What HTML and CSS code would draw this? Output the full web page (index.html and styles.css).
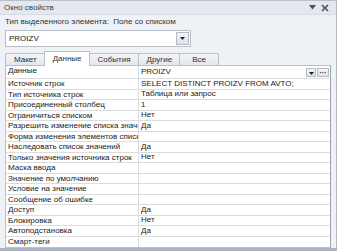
FILE: index.html
```html
<!DOCTYPE html>
<html lang="ru">
<head>
    <meta charset="UTF-8">
    <title>Окно свойств</title>
    <link rel="stylesheet" href="styles.css">
</head>
<body>
    <div class="props-window">
        <div class="title-bar">
            <span class="title">Окно свойств</span>
            <span class="title-tools">
                <svg width="7" height="5" viewBox="0 0 7 5"><path d="M0 0h7L3.5 4.5z" fill="#4a4f57"/></svg>
                <svg width="8" height="8" viewBox="0 0 8 8"><path d="M1 1l6 6M7 1L1 7" stroke="#4a4f57" stroke-width="1.6"/></svg>
            </span>
        </div>

        <div class="panel">
            <div class="sel-type">Тип выделенного элемента:&nbsp; Поле со списком</div>

            <div class="combo">
                <span class="combo-value">PROIZV</span>
                <span class="combo-btn">
                    <svg width="5" height="3" viewBox="0 0 5 3"><path d="M0 0h5L2.5 3z" fill="#222"/></svg>
                </span>
            </div>

            <div class="tabs">
                <div class="tab">Макет</div>
                <div class="tab active">Данные</div>
                <div class="tab">События</div>
                <div class="tab">Другие</div>
                <div class="tab wide">Все</div>
            </div>

            <div class="grid">
                <div class="row first">
                    <div class="cell name">Данные</div>
                    <div class="cell value">
                        <span>PROIZV</span>
                        <span class="cell-tools">
                            <span class="mini-btn"><svg width="5" height="3" viewBox="0 0 5 3"><path d="M0 0h5L2.5 3z" fill="#222"/></svg></span>
                            <span class="mini-btn dots">···</span>
                        </span>
                    </div>
                </div>
                <div class="row"><div class="cell name">Источник строк</div><div class="cell value">SELECT DISTINCT PROIZV FROM AVTO;</div></div>
                <div class="row"><div class="cell name">Тип источника строк</div><div class="cell value">Таблица или запрос</div></div>
                <div class="row"><div class="cell name">Присоединенный столбец</div><div class="cell value">1</div></div>
                <div class="row"><div class="cell name">Ограничиться списком</div><div class="cell value">Нет</div></div>
                <div class="row"><div class="cell name">Разрешить изменение списка значений</div><div class="cell value">Да</div></div>
                <div class="row"><div class="cell name">Форма изменения элементов списка</div><div class="cell value"></div></div>
                <div class="row"><div class="cell name">Наследовать список значений</div><div class="cell value">Да</div></div>
                <div class="row"><div class="cell name">Только значения источника строк</div><div class="cell value">Нет</div></div>
                <div class="row"><div class="cell name">Маска ввода</div><div class="cell value"></div></div>
                <div class="row"><div class="cell name">Значение по умолчанию</div><div class="cell value"></div></div>
                <div class="row"><div class="cell name">Условие на значение</div><div class="cell value"></div></div>
                <div class="row"><div class="cell name">Сообщение об ошибке</div><div class="cell value"></div></div>
                <div class="row"><div class="cell name">Доступ</div><div class="cell value">Да</div></div>
                <div class="row"><div class="cell name">Блокировка</div><div class="cell value">Нет</div></div>
                <div class="row"><div class="cell name">Автоподстановка</div><div class="cell value">Да</div></div>
                <div class="row"><div class="cell name">Смарт-теги</div><div class="cell value"></div></div>
            </div>
        </div>
    </div>
</body>
</html>
```

FILE: styles.css
```css
* {
    margin: 0;
    padding: 0;
    box-sizing: border-box;
}

body {
    font-family: 'Liberation Sans', Arial, sans-serif;
    font-size: 8px;
    color: #1a1a1a;
    background: #a9b3c1;
    width: 337px;
    height: 251px;
    overflow: hidden;
}

.props-window {
    width: 337px;
    height: 248px;
    background: #eef1f5;
    border-right: 1px solid #b3bac5;
    display: flex;
    flex-direction: column;
}

.title-bar {
    height: 16px;
    background: #e4e8ee;
    border-top: 1px solid #b8c0cb;
    border-bottom: 1px solid #d5dbe3;
    display: flex;
    align-items: center;
    justify-content: space-between;
    padding: 0 7px 0 4px;
    color: #3a3f47;
}

.title-tools {
    display: flex;
    align-items: center;
    gap: 5px;
}

.panel {
    flex: 1;
    padding: 0 4px 0 5px;
    display: flex;
    flex-direction: column;
}

.sel-type {
    height: 13px;
    line-height: 13px;
    color: #2d3138;
}

.combo {
    width: 186px;
    height: 17px;
    margin-top: 2px;
    background: #fff;
    border: 1px solid #b9c0ca;
    display: flex;
    align-items: center;
    justify-content: space-between;
    padding-left: 3px;
}

.combo-btn {
    width: 13px;
    height: 13px;
    margin-right: 1px;
    background: linear-gradient(#f4f5f7, #dde1e6);
    border: 1px solid #b4bac3;
    display: flex;
    align-items: center;
    justify-content: center;
}

.tabs {
    display: flex;
    margin-top: 4px;
    height: 15px;
    align-items: flex-end;
}

.tab {
    height: 13px;
    line-height: 12px;
    padding: 0 7px 0 8px;
    background: linear-gradient(#f3f4f6, #e2e5ea);
    border: 1px solid #b9c0ca;
    border-bottom: none;
    margin-right: -1px;
    color: #2d3138;
}

.tab.active {
    height: 15px;
    line-height: 14px;
    background: #fff;
    position: relative;
    z-index: 1;
}

.tab.wide {
    padding: 0 12px;
}

.grid {
    background: #fff;
    border: 1px solid #b9c0ca;
    border-right-color: #9aa3af;
    margin-top: -1px;
    margin-right: 1px;
}

.row {
    display: grid;
    grid-template-columns: 133px 1fr;
    height: 10.5px;
    border-bottom: 1px solid #dcdcdc;
}

.row.first {
    height: 13px;
}

.row:last-child {
    border-bottom: none;
}

.cell {
    padding-left: 2px;
    line-height: 10px;
    white-space: nowrap;
    overflow: hidden;
}

.cell.name {
    border-right: 1px solid #dcdcdc;
}

.cell.value {
    display: flex;
    justify-content: space-between;
    align-items: center;
}

.cell-tools {
    display: flex;
    gap: 1px;
    padding-right: 1px;
}

.mini-btn {
    width: 10px;
    height: 9px;
    background: linear-gradient(#f4f5f7, #dde1e6);
    border: 1px solid #b4bac3;
    display: flex;
    align-items: flex-end;
    justify-content: center;
    padding-bottom: 1px;
    font-size: 7px;
    line-height: 5px;
}

.mini-btn.dots {
    width: 12px;
    align-items: center;
    padding-bottom: 0;
    font-weight: bold;
}
```
